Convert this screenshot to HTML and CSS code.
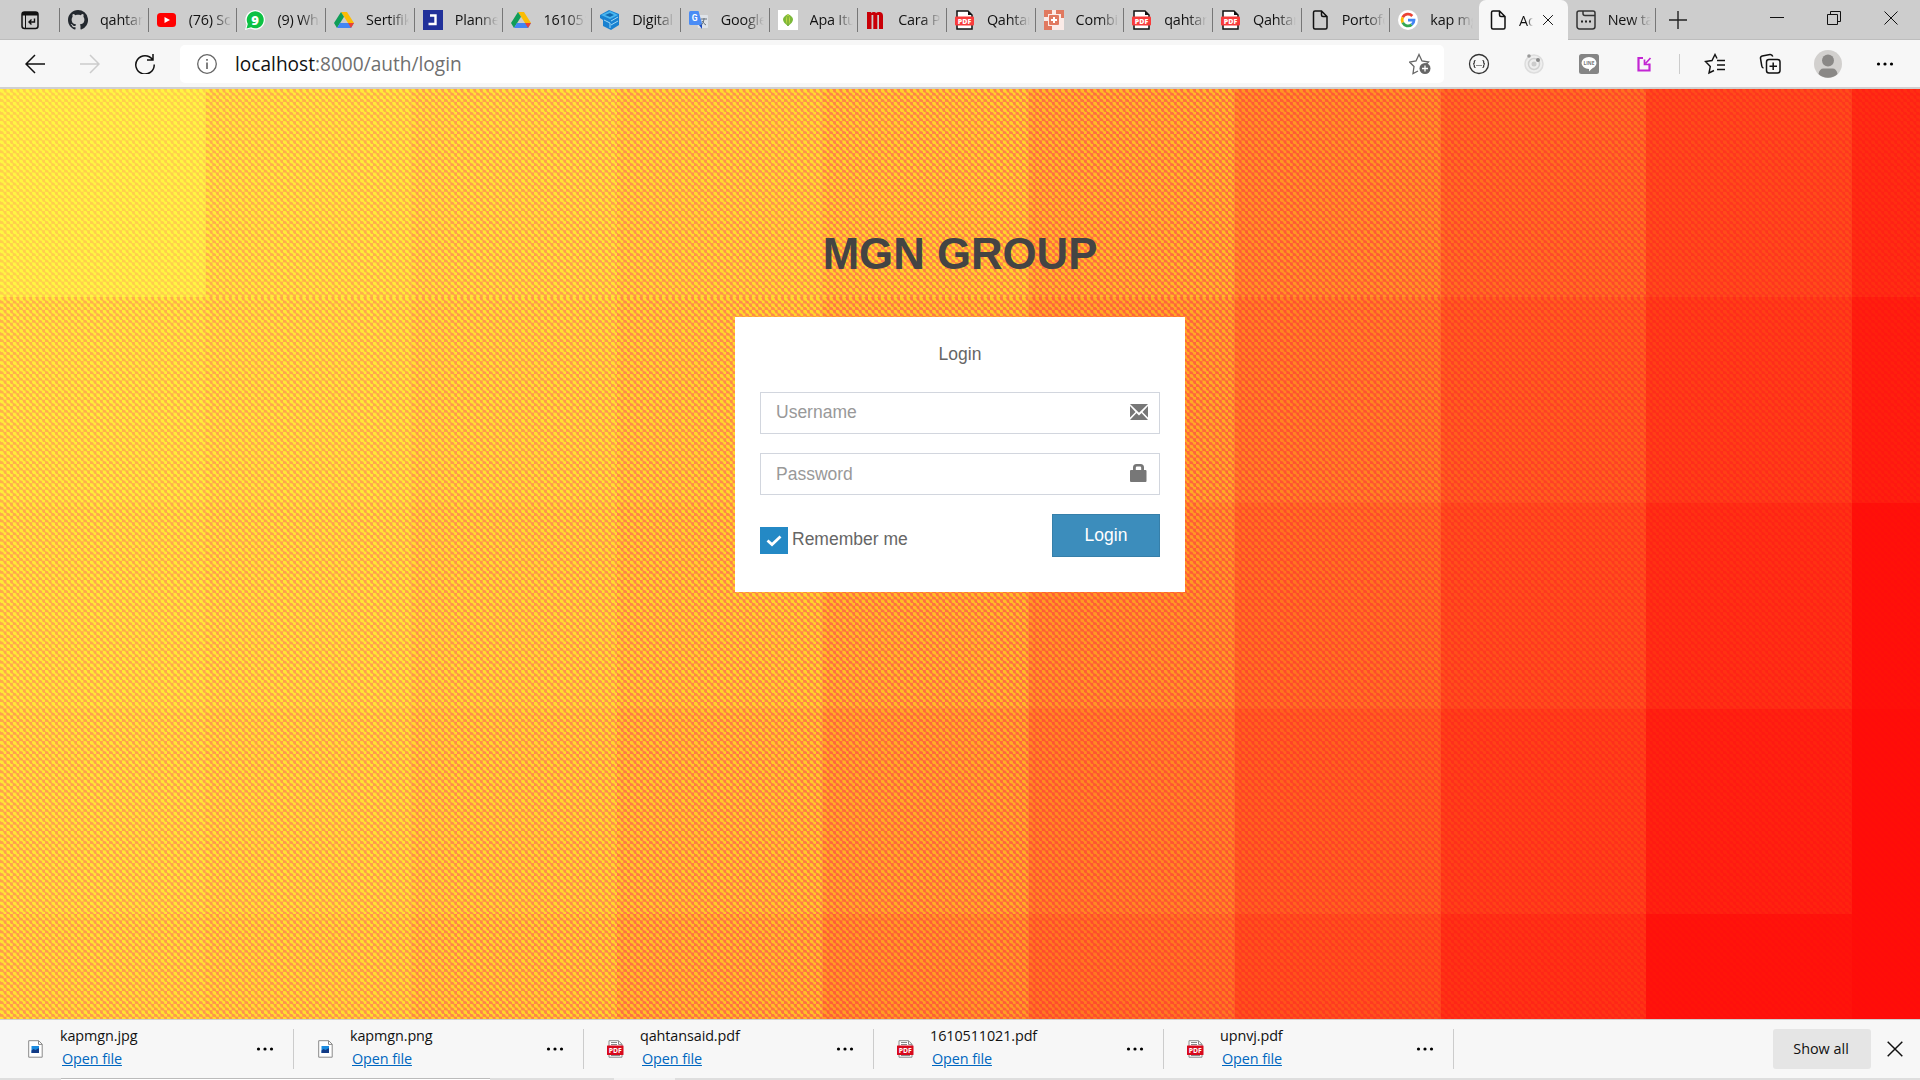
FILE: index.html
```html
<!DOCTYPE html>
<html lang="en">
<head>
<meta charset="utf-8">
<title>Login</title>
<link rel="stylesheet" href="styles.css">
</head>
<body>
<svg class="defs" aria-hidden="true">
  <symbol id="page" viewBox="0 0 20 20"><path d="M5 1h6.500l5.500 5.500v11a1.500 1.500 0 0 1-1.500 1.500h-10.500a1.500 1.500 0 0 1-1.500-1.500v-15a1.500 1.500 0 0 1 1.500-1.500zM11.500 1v4a1.500 1.500 0 0 0 1.500 1.500h4" fill="none" stroke="#111" stroke-width="1.500"/></symbol>
  <symbol id="pdf" viewBox="0 0 20 20"><path d="M2 1h11l4 4v14h-15z" fill="#fff" stroke="#111" stroke-width="1.500"/><path d="M13 1v4h4z" fill="#111"/><rect x="0" y="6.500" width="19" height="9" rx="1" fill="#f83b3b"/><text x="9.500" y="13.700" text-anchor="middle" font-family="Open Sans" font-weight="800" font-size="7" fill="#fff">PDF</text></symbol>
  <symbol id="drive" viewBox="0 0 20 20"><path d="M7 2h6l7 11h-6z" fill="#fbbc04"/><path d="M7 2l3 4.700-7 11.300-3-5z" fill="#0f9d58"/><path d="M6 13h14l-3 5h-14z" fill="#4285f4"/><path d="M14 13h6l-3 5z" fill="#ea4335"/></symbol>
  <symbol id="close" viewBox="0 0 16 16"><path d="M1.500 1.500l13 13M14.500 1.500l-13 13" stroke="#111" stroke-width="1.300"/></symbol>
  <symbol id="dots" viewBox="0 0 18 4"><circle cx="2.500" cy="2" r="1.600"/><circle cx="9" cy="2" r="1.600"/><circle cx="15.500" cy="2" r="1.600"/></symbol>
  <symbol id="image-file" viewBox="0 0 15 18"><path d="M.7.700h10l3.500 3.500v13h-13.500z" fill="#fff" stroke="#8a8a8a"/><path d="M10.500.700v3.700h3.700" fill="none" stroke="#8a8a8a"/><path d="M3.500 6h7.500v7h-7.500z" fill="#1b8be0"/><path d="M3.500 10.500l2-1.500 2 1 3.500-2v5h-7.500z" fill="#123a85"/></symbol>
  <symbol id="pdf-file" viewBox="0 0 17 18"><path d="M2 .7h9.500l3.500 3.500v13h-13z" fill="#fff" stroke="#8a8a8a"/><path d="M4 2.500h6M4 4.500h6M4 15.500h9" stroke="#888"/><path d="M11.500.700v3.700h3.500" fill="none" stroke="#8a8a8a"/><rect x="0" y="5.500" width="16.500" height="9.500" rx=".5" fill="#d8091c"/><text x="8.200" y="12.700" text-anchor="middle" font-family="Open Sans" font-weight="700" font-size="6.800" fill="#fff">PDF</text></symbol>
</svg>

<header class="tabstrip">
  <div class="tab-actions"><svg width="20" height="20" viewBox="0 0 20 20"><rect x="2" y="2" width="16" height="16.500" rx="2.500" fill="none" stroke="#111" stroke-width="1.500"/><path d="M2 4.500a2.500 2.500 0 0 1 2.500-2.500h11a2.500 2.500 0 0 1 2.500 2.500v1h-16z" fill="#111"/><path d="M5.500 5v13" stroke="#111"/><path d="M14.500 8.500v3.500h-5.500M11.500 9.500l-2.500 2.500 2.500 2.500" fill="none" stroke="#111" stroke-width="1.400"/></svg></div>
  <div class="tab"><svg class="fav" viewBox="0 0 16 16"><path fill="#24292f" d="M8 0C3.580 0 0 3.580 0 8c0 3.540 2.290 6.530 5.470 7.590.4.070.55-.17.55-.38 0-.19-.01-.82-.01-1.490-2.010.37-2.530-.49-2.690-.94-.09-.23-.48-.94-.82-1.130-.28-.15-.68-.52-.01-.53.63-.01 1.080.58 1.230.82.72 1.210 1.870.87 2.330.66.07-.52.28-.87.51-1.070-1.780-.2-3.640-.89-3.640-3.950 0-.87.31-1.590.82-2.150-.08-.2-.36-1.020.08-2.120 0 0 .67-.21 2.200.82.64-.18 1.320-.27 2-.27s1.360.09 2 .27c1.530-1.040 2.200-.82 2.200-.82.44 1.100.16 1.920.08 2.120.51.56.82 1.270.82 2.150 0 3.070-1.870 3.750-3.650 3.950.29.25.54.73.54 1.480 0 1.070-.01 1.930-.01 2.200 0 .21.15.46.55.38A8 8 0 0 0 8 0z"/></svg><span>qahtansaid</span></div>
  <div class="tab"><svg class="fav" viewBox="0 0 20 20"><rect x="0" y="3" width="19" height="14" rx="3.500" fill="#f00"/><path d="M7.500 7l5.500 3-5.500 3z" fill="#fff"/></svg><span>(76) Scary</span></div>
  <div class="tab"><svg class="fav" viewBox="0 0 20 20"><path d="M0 20l1.500-5.500a9.800 9.800 0 1 1 4 4z" fill="#fff"/><path d="M1.500 18.500l1.300-4.500a8.500 8.500 0 1 1 3.300 3.300z" fill="#0cc143"/><text x="10" y="14.500" text-anchor="middle" font-family="Open Sans" font-weight="800" font-size="13" fill="#fff">9</text></svg><span>(9) WhatsApp</span></div>
  <div class="tab"><svg class="fav"><use href="#drive"/></svg><span>Sertifikat</span></div>
  <div class="tab"><svg class="fav" viewBox="0 0 20 20"><path d="M0 0h20v20h-20z" fill="#21319a"/><path d="M7 5.500h5.500v8.500h-7" fill="none" stroke="#fff" stroke-width="2.400"/></svg><span>Planner</span></div>
  <div class="tab"><svg class="fav"><use href="#drive"/></svg><span>1610511</span></div>
  <div class="tab"><svg class="fav" viewBox="0 0 20 20"><path d="M0 5l9-5 10 4v11l-8 5-8-4v-6l-3-2z" fill="#1981d0"/><path d="M1 5l9-4 8 4-8 4z" fill="#48b6f0"/><path d="M4 10l6 3v5M11 11l7-4M11 15l7-4" fill="none" stroke="#9fd9f6"/><path d="M5 5l5-2 4 2-4 2z" fill="#146bb0"/></svg><span>Digital Sig</span></div>
  <div class="tab"><svg class="fav" viewBox="0 0 20 20"><path d="M7 5h11q1 0 1 1v11q0 1-1 1h-9z" fill="#dfe3e8"/><path d="M10 15l3 4v-4z" fill="#1b4bc1"/><path d="M1.500 1h8l4 14h-12q-1.500 0-1.500-1.500v-11q0-1.500 1.500-1.500z" fill="#4a8cf5"/><text x="5.700" y="11.200" text-anchor="middle" font-family="Roboto" font-weight="700" font-size="8.500" fill="#fff">G</text><path d="M12 9h6M15 8v1q0 4-3 6M13 11q2 3 4 4" fill="none" stroke="#66717d"/></svg><span>Google T</span></div>
  <div class="tab"><svg class="fav" viewBox="0 0 20 20"><path d="M0 0h20v20h-20z" fill="#fff"/><path d="M10 4q10 5 0 12q-10-7 0-12z" fill="#7cb93a"/><path d="M10 4q-4 6 0 12q4-6 0-12z" fill="#c5d945"/><path d="M10 6v10" stroke="#49952d"/></svg><span>Apa Itu K</span></div>
  <div class="tab"><svg class="fav" viewBox="0 0 20 20"><path d="M1 2h4v1q1.500-1.500 3.500-1 1 0 1.500 1 1.500-1.500 4-1 3 .5 3 4v13h-4v-14h-1.700v14h-4v-14h-1.800v14h-4.500z" fill="#c90007"/></svg><span>Cara Pem</span></div>
  <div class="tab"><svg class="fav"><use href="#pdf"/></svg><span>Qahtan S</span></div>
  <div class="tab"><svg class="fav" viewBox="0 0 20 20"><path d="M0 0h20v20h-20z" fill="#e1795f"/><path d="M8 0h4v4h5v4h3v12h-12v-4h-4v-5h-4v-4h4v-3h4z" fill="#fff" opacity=".85"/><rect x="5" y="5" width="10" height="10" rx="1" fill="#e1795f"/><path d="M10 7v6M7 10h6" stroke="#fff" stroke-width="2"/></svg><span>Combine</span></div>
  <div class="tab"><svg class="fav"><use href="#pdf"/></svg><span>qahtansa</span></div>
  <div class="tab"><svg class="fav"><use href="#pdf"/></svg><span>Qahtan S</span></div>
  <div class="tab"><svg class="fav"><use href="#page"/></svg><span>Portofolio</span></div>
  <div class="tab"><svg class="fav" viewBox="0 0 20 20"><circle cx="10" cy="10" r="10" fill="#fff"/><g fill="none" stroke-width="2.800"><path d="M14.300 5.900a6 6 0 0 0-9.600 1.400" stroke="#ea4335"/><path d="M4.700 7.300a6 6 0 0 0 0 5.400" stroke="#fbbc05"/><path d="M4.700 12.700a6 6 0 0 0 9 2" stroke="#34a853"/><path d="M13.700 14.700q2.300-1.700 2.300-4.500h-6" stroke="#4285f4"/></g></svg><span>kap mgn</span></div>
  <div class="tab active"><svg class="fav"><use href="#page"/></svg><span>Admin</span><svg class="tab-close"><use href="#close"/></svg></div>
  <div class="tab"><svg class="fav" viewBox="0 0 20 20"><path d="M3 1h14a2 2 0 0 1 2 2v13.500a2.500 2.500 0 0 1-2.500 2.500h-13a2.500 2.500 0 0 1-2.500-2.500v-13.500a2 2 0 0 1 2-2zM7 1v2.500a2 2 0 0 0 2 2h10" fill="none" stroke="#333" stroke-width="1.500"/><path d="M5 11.500h2M9 11.500h2M13 11.500h2" stroke="#222" stroke-width="2"/></svg><span>New tab</span></div>
  <svg class="new-tab" viewBox="0 0 18 18"><path d="M9 0v18M0 9h18" stroke="#222" stroke-width="1.400"/></svg>
  <div class="window-controls">
    <svg viewBox="0 0 14 14"><path d="M0 6.500h14" stroke="#111"/></svg>
    <svg viewBox="0 0 14 14"><path d="M.5 3.500h10v10h-10zM3.500 3.500v-3h10v10h-3" fill="none" stroke="#111"/></svg>
    <svg viewBox="0 0 14 14"><path d="M.5.500l13 13M13.500.500l-13 13" stroke="#111"/></svg>
  </div>
</header>

<nav class="toolbar">
  <svg class="nav-icon" viewBox="0 0 20 20"><path d="M20 10h-19M10 1l-9 9 9 9" fill="none" stroke="#111" stroke-width="1.500"/></svg>
  <svg class="nav-icon" viewBox="0 0 20 20"><path d="M0 10h19M10 1l9 9-9 9" fill="none" stroke="#ccc" stroke-width="1.500"/></svg>
  <svg class="nav-icon" viewBox="0 0 20 20"><path d="M17.500 5.500a9.200 9.200 0 1 0 1.700 5M18 0v6h-6" fill="none" stroke="#111" stroke-width="1.500"/></svg>
  <div class="address">
    <svg class="info" viewBox="0 0 20 20"><circle cx="10" cy="10" r="9.300" fill="none" stroke="#666" stroke-width="1.300"/><path d="M10 8.500v6.500M10 5v1.700" stroke="#555" stroke-width="1.500"/></svg>
    <span class="url">localhost<span>:8000/auth/login</span></span>
    <svg class="add-fav" viewBox="0 0 22 22"><path d="M9 18l-5 2.500 1-7-4.500-4.500 6.500-1 3-6.500 3 6.500 6.500 1-2.500 2.500" fill="none" stroke="#666" stroke-width="1.300"/><circle cx="16" cy="15.500" r="5.500" fill="#666"/><path d="M16 12.500v6M13 15.500h6" stroke="#fff" stroke-width="1.300"/></svg>
  </div>
  <div class="extensions">
    <svg viewBox="0 0 22 22"><circle cx="11" cy="11" r="9.500" fill="none" stroke="#333" stroke-width="1.300"/><path d="M7.500 7.500q-1.500 0-1.200 2 0 1.500-1.300 1.500 1.300 0 1.300 1.500-.3 2 1.200 2M14.500 7.500q1.500 0 1.200 2 0 1.500 1.300 1.500-1.300 0-1.300 1.500.3 2-1.200 2M8.500 12.500h1M10.500 12.500h1M12.500 12.500h1" fill="none" stroke="#222" stroke-width="1.100"/></svg>
    <svg viewBox="0 0 22 22"><circle cx="11" cy="11" r="9" fill="#eee" stroke="#ddd" stroke-width="1.500"/><circle cx="11" cy="11" r="5.500" fill="none" stroke="#d0d0d0" stroke-width="1.500"/><circle cx="11" cy="11" r="2.500" fill="#ccc"/><circle cx="15" cy="7" r="2" fill="#888"/><circle cx="6" cy="3" r="1.800" fill="#999"/></svg>
    <svg viewBox="0 0 22 22"><rect x="1" y="1" width="20" height="20" rx="2.500" fill="#858585"/><ellipse cx="11" cy="10" rx="7.500" ry="6" fill="#fff"/><path d="M11 15v3.500l4-4z" fill="#fff"/><text x="11" y="12" text-anchor="middle" font-family="Open Sans" font-weight="700" font-size="4.800" fill="#777">LINE</text></svg>
    <svg viewBox="0 0 22 22"><path d="M10 5h-4.500v12.500h11v-7" fill="none" stroke="#c326d3" stroke-width="2.200"/><path d="M17.500 5l-5 5.500M11.500 6.500v5h5" fill="none" stroke="#c326d3" stroke-width="1.700"/></svg>
  </div>
  <i class="divider"></i>
  <div class="browser-actions">
    <svg viewBox="0 0 22 22"><path d="M13 5.500l-2-4-3 6-6.500 1 4.800 5-1.300 6.500 5-2.500M13 7.500h8M13 12h8M13 16.500h8" fill="none" stroke="#111" stroke-width="1.400"/></svg>
    <svg viewBox="0 0 22 22"><rect x="7.500" y="6.500" width="13.500" height="13.500" rx="2.500" fill="none" stroke="#111" stroke-width="1.500"/><path d="M14.200 9.500v7.500M10.500 13.200h7.500M4.500 15q-1.500-.3-1.700-2l-1.300-7.500q-.2-2 1.700-2.500l7.800-1.500q2-.2 2.800 2" fill="none" stroke="#111" stroke-width="1.500"/></svg>
  </div>
  <svg class="avatar" viewBox="0 0 28 28"><circle cx="14" cy="14" r="14" fill="#d2d0ce"/><circle cx="14" cy="10.500" r="6" fill="#8a8886"/><path d="M4.500 24q1-5.500 5-5.500h9q4 0 5 5.500a14 14 0 0 1-19 0z" fill="#8a8886"/></svg>
  <svg class="menu"><use href="#dots"/></svg>
</nav>

<main class="page">
  <div class="mosaic" id="mosaic"></div>
  <div class="login">
    <h1>MGN GROUP</h1>
    <form class="card">
      <p>Login</p>
      <label class="field"><input type="text" placeholder="Username"><svg viewBox="0 0 18 16"><path d="M0 0h18l-9 8.700z M0 2l5.500 6-5.500 5.500zM18 2l-5.500 6 5.500 5.500zM0 16l6.500-7 2.500 2.500 2.500-2.500 6.500 7z" fill="#777"/></svg></label>
      <label class="field password"><input type="password" placeholder="Password"><svg viewBox="0 0 18 18"><path d="M1.500 6h1.500v-2.500q0-3.500 3.500-3.500h4q3.500 0 3.500 3.500v2.500h1.500q1 0 1 1v10q0 1-1 1h-14.500q-1 0-1-1v-10q0-1 1-1zM5.800 6h5.400v-2.300q0-1.200-1.200-1.200h-3q-1.200 0-1.200 1.200z" fill="#777"/></svg></label>
      <div class="actions">
        <div class="remember"><svg viewBox="0 0 28 27"><path d="M0 0h28v27h-28z" fill="#2489c5"/><path d="M7.500 13.500l4.500 4 8.500-8" fill="none" stroke="#fff" stroke-width="2.800"/></svg><span>Remember me</span></div>
        <button type="button">Login</button>
      </div>
    </form>
  </div>
</main>

<footer class="downloads">
  <div class="download"><svg><use href="#image-file"/></svg><div><b>kapmgn.jpg</b><a>Open file</a></div><svg class="menu"><use href="#dots"/></svg></div>
  <div class="download"><svg><use href="#image-file"/></svg><div><b>kapmgn.png</b><a>Open file</a></div><svg class="menu"><use href="#dots"/></svg></div>
  <div class="download"><svg><use href="#pdf-file"/></svg><div><b>qahtansaid.pdf</b><a>Open file</a></div><svg class="menu"><use href="#dots"/></svg></div>
  <div class="download"><svg><use href="#pdf-file"/></svg><div><b>1610511021.pdf</b><a>Open file</a></div><svg class="menu"><use href="#dots"/></svg></div>
  <div class="download"><svg><use href="#pdf-file"/></svg><div><b>upnvj.pdf</b><a>Open file</a></div><svg class="menu"><use href="#dots"/></svg></div>
  <button class="show-all" type="button">Show all</button>
  <svg class="close-bar"><use href="#close"/></svg>
</footer>
<div class="taskbar"><i class="search"></i><i class="running"></i></div>
<script src="mosaic.js"></script>
</body>
</html>
```
FILE: styles.css
```css
* { box-sizing: border-box; }
body {
  margin: 0;
  width: 1920px;
  height: 1080px;
  overflow: hidden;
  display: flex;
  flex-direction: column;
  font-family: "Open Sans", "Noto Sans", sans-serif;
  color: #111;
}
svg { display: block; flex: none; }
.defs { position: absolute; width: 0; height: 0; }

/* Tabs */
.tabstrip {
  flex: none;
  height: 40px;
  display: flex;
  align-items: center;
  background: #cdcdcd;
  border-bottom: 1px solid #bdbdbd;
  font-size: 14.4px;
}
.tab-actions { width: 60px; height: 24px; padding: 2px 0 0 20px; border-right: 1px solid #777; }
.tab {
  width: 88.7px;
  height: 24px;
  display: flex;
  align-items: center;
  padding-left: 8px;
  border-right: 1px solid #777;
}
.fav { width: 20px; height: 20px; }
.tab span {
  width: 43px;
  margin-left: 12px;
  overflow: hidden;
  white-space: nowrap;
  letter-spacing: -0.2px;
  -webkit-mask-image: linear-gradient(90deg, #000 55%, transparent);
  mask-image: linear-gradient(90deg, #000 55%, transparent);
}
.tab:has(+ .active) { border-right: 0; }
.tab.active {
  height: 40px;
  margin-bottom: -1px;
  background: #f7f7f7;
  border: 0;
  border-radius: 7px 7px 0 0;
  padding-left: 9px;
}
.tab.active span { width: 14px; margin-left: 11px; }
.tab-close { width: 12px; height: 12px; margin-left: 9px; }
.new-tab { width: 18px; height: 18px; margin-left: 13px; }
.window-controls { display: flex; gap: 43px; margin: 0 22px 3px auto; }
.window-controls svg { width: 14px; height: 14px; }

/* Toolbar */
.toolbar {
  flex: none;
  height: 49px;
  display: flex;
  align-items: center;
  padding: 1px 0 0 25px;
  background: #f7f7f7;
  border-bottom: 2px solid #d0d0d0;
}
.nav-icon { width: 20px; height: 20px; margin-right: 35px; }
.address {
  width: 1264px;
  height: 38px;
  margin-left: -10px;
  display: flex;
  align-items: center;
  padding: 0 13px 0 17px;
  background: #fff;
  border-radius: 5px;
}
.info { width: 20px; height: 20px; }
.url { margin-left: 18px; font-size: 19.1px; flex: 1; }
.url span { color: #6f6f6f; }
.add-fav { width: 22px; height: 22px; }
.extensions { display: flex; gap: 33px; margin-left: 24px; }
.extensions svg, .browser-actions svg { width: 22px; height: 22px; }
.divider { width: 1px; height: 20px; margin-left: 24px; background: #ccc; }
.browser-actions { display: flex; gap: 33px; margin-left: 24px; }
.avatar { width: 28px; height: 28px; margin-left: 33px; }
.menu { width: 18px; height: 4px; }
.toolbar .menu { margin-left: 34px; }

/* Login page */
.page {
  flex: none;
  height: 930px;
  display: grid;
  grid-template-columns: 1920px;
  overflow: hidden;
}
.mosaic, .login { grid-area: 1 / 1; min-height: 0; }
.mosaic {
  display: grid;
  grid-template-columns: repeat(10, 205.8px);
  grid-template-rows: 208px repeat(4, 205.8px);
}
.mosaic i {
  background:
    linear-gradient(45deg, var(--lo) 26%, transparent 36%, var(--hi) 46%, var(--hi) 54%, transparent 64%, var(--lo) 74%) 0 0 / 6.43px 6.43px,
    conic-gradient(var(--lo) 25%, var(--hi) 0 50%, var(--lo) 0 75%, var(--hi) 0) 0 0 / 6.43px 6.43px;
}
.login {
  z-index: 1;
  justify-self: center;
  width: 450px;
  padding-top: 133px;
  font-family: "Liberation Sans", Arial, sans-serif;
  color: #666;
  font-size: 17.5px;
}
.login h1 {
  margin: 0 0 31px;
  font-size: 43.75px;
  line-height: 64px;
  text-align: center;
  color: #444;
}
.card { height: 275px; padding: 25px; background: #fff; }
.card p { margin: 0 0 25px; line-height: 25px; text-align: center; }
.field {
  height: 42px;
  display: flex;
  align-items: center;
  margin-bottom: 19px;
  padding: 0 11px 0 15px;
  border: 1px solid #d2d6de;
}
.field input {
  flex: 1;
  height: 38px;
  padding: 0 0 1px;
  border: 0;
  outline: 0;
  font: inherit;
}
.field.password input { padding: 1px 0 0; }
.field input::placeholder { color: #999; }
.field svg { width: 18px; height: 18px; margin-bottom: 2px; }
.actions { display: flex; justify-content: space-between; }
.remember { display: flex; align-items: center; gap: 4px; padding-top: 10px; }
.remember svg { width: 28px; height: 27px; }
.remember span { margin-bottom: 3px; }
.card button {
  width: 108px;
  height: 43px;
  padding: 0 0 1px;
  background: #3c8dbc;
  border: 1px solid #367fa9;
  color: #fff;
  font: inherit;
}

/* Downloads */
.downloads {
  flex: none;
  height: 59px;
  display: flex;
  align-items: center;
  background: #f7f7f7;
  border-top: 1px solid #d0d0d0;
  font-size: 14.4px;
}
.download {
  width: 290px;
  height: 40px;
  display: flex;
  align-items: center;
  padding-left: 23px;
  border-right: 1px solid #ccc;
}
.download:first-child { width: 294px; padding-left: 27px; }
.download > svg:first-child { width: 17px; height: 18px; }
.download div { flex: 1; margin: -4px 0 0 16px; }
.download b, .download a { display: block; font-weight: 400; line-height: 23px; letter-spacing: -0.1px; }
.download a { margin-left: 2px; color: #0067c0; text-decoration: underline; }
.download .menu { margin-right: 19px; }
.show-all {
  width: 98px;
  height: 40px;
  margin-left: auto;
  padding: 0 2px 2px 0;
  border: 0;
  border-radius: 3px;
  background: #e5e5e5;
  color: #111;
  font: inherit;
}
.close-bar { width: 18px; height: 18px; margin: 0 16px 0 15px; }
.taskbar { flex: none; height: 2px; display: flex; background: #dedede; }
.taskbar .search { width: 429px; margin-left: 61px; background: #fff; border-top: 1px solid #bbb; }
.taskbar .running { width: 61px; margin-left: 124px; background: #f2f2f2; }
```
FILE: mosaic.js
```js
// Each block steps from yellow (top left) to red (bottom right).
const low = [[255,206,76],[255,172,76],[255,156,78],[255,144,76],[255,128,72],[255,108,64],[255,90,52],[255,72,42],[255,54,30],[255,34,20],[255,12,10]];
const high = [[255,246,66],[255,236,56],[255,230,52],[255,221,46],[255,212,42],[255,188,38],[255,150,36],[255,112,32],[255,76,26],[255,46,18],[255,14,8]];

function pick(scale, step) {
  const at = Math.min(step, 10);
  const a = scale[Math.floor(at)];
  const b = scale[Math.ceil(at)];
  const mix = a.map((v, i) => Math.round(v + (b[i] - v) * (at % 1)));
  return `rgb(${mix.join(",")})`;
}

const mosaic = document.getElementById("mosaic");
for (let row = 0; row < 5; row++) {
  for (let col = 0; col < 10; col++) {
    const block = document.createElement("i");
    const start = row > 0 && col === 0 ? 0.5 : col;
    const step = start + row * 0.45;
    block.style.setProperty("--lo", pick(low, step));
    block.style.setProperty("--hi", pick(high, step));
    mosaic.append(block);
  }
}
```
